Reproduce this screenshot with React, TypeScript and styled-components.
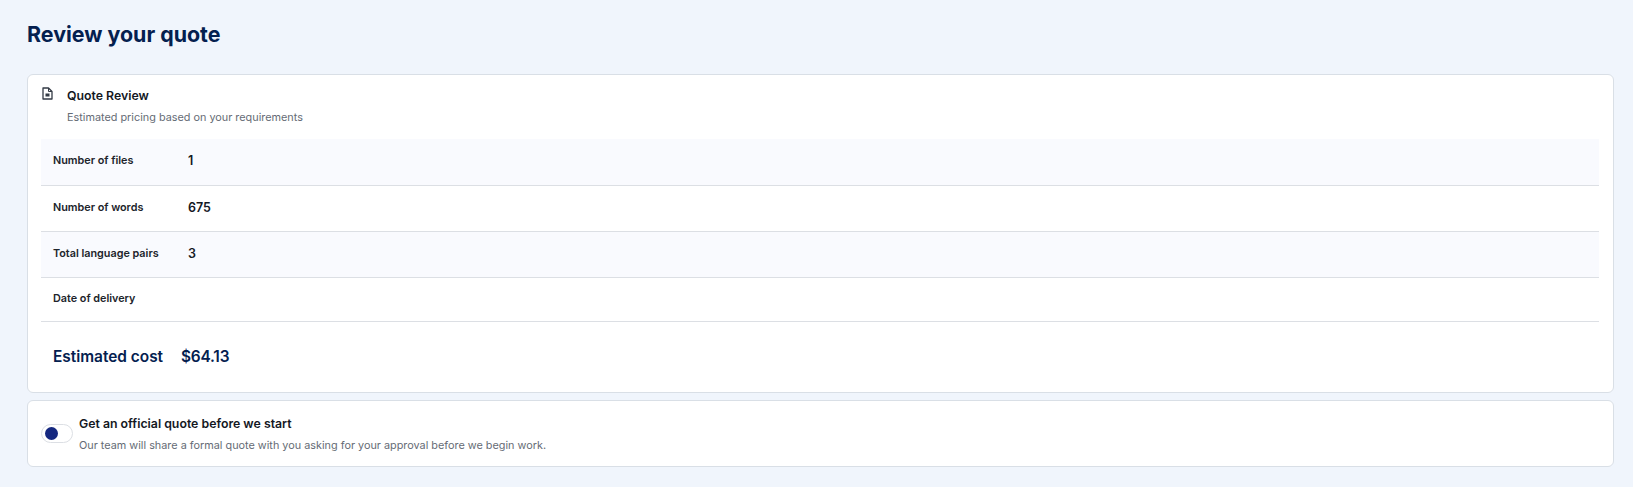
import React from "react";
import styled, { createGlobalStyle } from "styled-components";

const GlobalStyle = createGlobalStyle`
  html, body {
    margin: 0;
    padding: 0;
    background: #f0f5fc;
    font-family: Inter, "Liberation Sans", sans-serif;
  }
`;

const Page = styled.div`
  width: 1633px;
  height: 487px;
  box-sizing: border-box;
  padding: 19px 19px 0 27px;
  overflow: hidden;
`;

const Title = styled.h1`
  margin: 0 0 24px;
  height: 31px;
  font-size: 21.4px;
  line-height: 31px;
  font-weight: 700;
  color: #04204f;
`;

const Card = styled.section`
  box-sizing: border-box;
  background: #ffffff;
  border: 1px solid #d9dfe6;
  border-radius: 6px;
`;

const QuoteCard = styled(Card)`
  height: 319px;
  padding: 11px 14px 0 14px;
  margin-bottom: 7px;
`;

const Header = styled.div`
  display: flex;
  height: 53px;
  gap: 14px;
`;

const DocIcon = styled.svg`
  width: 11px;
  height: 13px;
  flex: none;
  margin-top: 1px;
  color: #333a45;
`;

const HeaderText = styled.div`
  display: flex;
  flex-direction: column;
  padding-top: 1px;
`;

const CardTitle = styled.div`
  font-size: 12.3px;
  line-height: 18px;
  font-weight: 600;
  color: #14181f;
`;

const Subtitle = styled.div`
  font-size: 10.85px;
  line-height: 16px;
  color: #656b75;
`;

const HeaderSubtitle = styled(Subtitle)`
  margin-top: 4px;
`;

const Row = styled.div<{ $shaded?: boolean; $height: number }>`
  box-sizing: border-box;
  display: flex;
  align-items: center;
  height: ${(p) => p.$height}px;
  margin-left: -1px;
  padding: 0 0 3px 12px;
  background: ${(p) => (p.$shaded ? "#f9fafe" : "#ffffff")};
  border-bottom: 1px solid #dcdfe4;
`;

const RowLabel = styled.div`
  width: 135px;
  font-size: 10.8px;
  font-weight: 600;
  color: #20242b;
`;

const RowValue = styled.div`
  font-size: 12.5px;
  font-weight: 600;
  color: #14181f;
`;

const Total = styled.div`
  display: flex;
  align-items: center;
  gap: 18px;
  height: 72px;
  margin-left: -1px;
  padding: 0 12px 4px;
  box-sizing: border-box;
  font-size: 15.4px;
  font-weight: 600;
  color: #04204f;
`;

const TotalValue = styled.span`
  letter-spacing: -0.2px;
`;

const OptionCard = styled(Card)`
  display: flex;
  align-items: center;
  height: 67px;
  padding: 0 13px;
  gap: 6px;
`;

const Toggle = styled.div`
  box-sizing: border-box;
  display: flex;
  align-items: center;
  width: 32px;
  height: 19px;
  padding-left: 3px;
  flex: none;
  background: #ffffff;
  border: 1px solid #dcdfe4;
  border-radius: 10px;
`;

const Knob = styled.div`
  width: 13px;
  height: 13px;
  border-radius: 50%;
  background: #14277f;
`;

const OptionText = styled.div`
  display: flex;
  flex-direction: column;
  gap: 4px;
`;

const rows = [
  { label: "Number of files", value: "1", shaded: true, height: 47 },
  { label: "Number of words", value: "675", height: 46 },
  { label: "Total language pairs", value: "3", shaded: true, height: 46 },
  { label: "Date of delivery", value: "", height: 44 },
];

export default function App() {
  return (
    <Page>
      <GlobalStyle />
      <Title>Review your quote</Title>
      <QuoteCard>
        <Header>
          <DocIcon viewBox="0 0 11 13" fill="none" stroke="currentColor" strokeWidth="1.3">
            <path d="M1 1h5.5L10 4.5V12H1z" strokeLinejoin="round" />
            <path d="M6.5 1v3.5H10" strokeWidth="1" />
            <rect x="3.5" y="6.5" width="4" height="3" fill="currentColor" stroke="none" />
          </DocIcon>
          <HeaderText>
            <CardTitle>Quote Review</CardTitle>
            <HeaderSubtitle>Estimated pricing based on your requirements</HeaderSubtitle>
          </HeaderText>
        </Header>
        {rows.map((row) => (
          <Row key={row.label} $shaded={row.shaded} $height={row.height}>
            <RowLabel>{row.label}</RowLabel>
            <RowValue>{row.value}</RowValue>
          </Row>
        ))}
        <Total>
          <span>Estimated cost</span>
          <TotalValue>$64.13</TotalValue>
        </Total>
      </QuoteCard>
      <OptionCard>
        <Toggle>
          <Knob />
        </Toggle>
        <OptionText>
          <CardTitle>Get an official quote before we start</CardTitle>
          <Subtitle>Our team will share a formal quote with you asking for your approval before we begin work.</Subtitle>
        </OptionText>
      </OptionCard>
    </Page>
  );
}
